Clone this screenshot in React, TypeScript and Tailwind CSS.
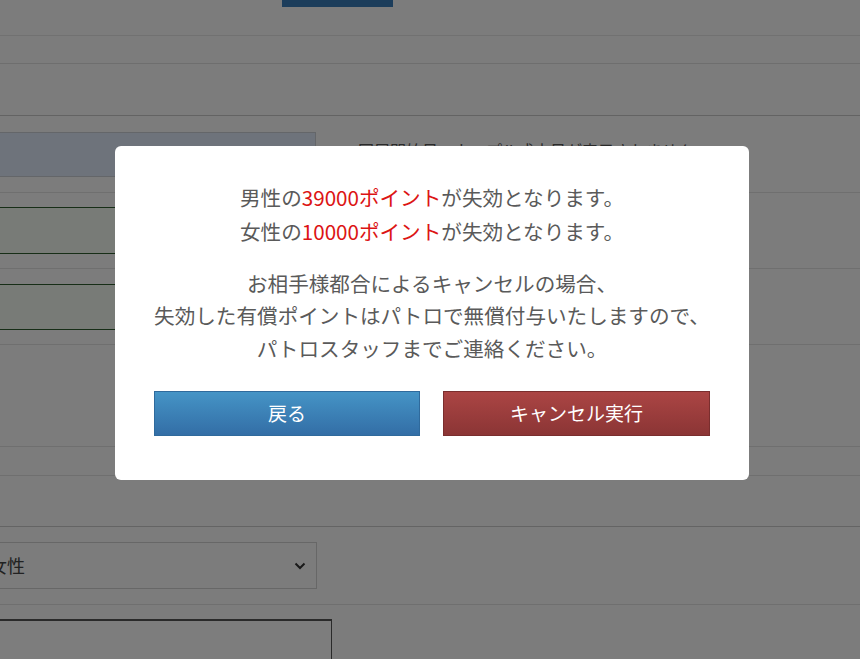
import React from "react";

const font = { fontFamily: '"Noto Sans CJK JP", "Noto Sans", sans-serif' };

function Row({ h, children, dark }: { h: string; children?: React.ReactNode; dark?: boolean }) {
  return (
    <div className={`${h} border-b ${dark ? "border-[#c8c8c8]" : "border-[#dedede]"} flex items-center`}>
      {children}
    </div>
  );
}

export default function App() {
  return (
    <div className="relative w-[860px] h-[659px] overflow-hidden bg-[#f8f8f8]" style={font}>
      {/* background page */}
      <div className="flex flex-col">
        <div className="h-[36px] border-b border-[#e2e2e2]">
          <div className="ml-[282px] w-[111px] h-[7px] bg-[#397ab7]" />
        </div>
        <div className="h-[28px] border-b border-[#dcdcdc]" />
        <div className="h-[52px] border-b border-[#c6c6c6]" />
        <Row h="h-[77px]">
          <div className="w-[316px] h-[45px] bg-[#dde7f7] border border-[#c9ccd2] border-l-0" />
          <div className="ml-[42px] mb-[8px] text-[16px] leading-[20px] text-[#555]">同居開始日・カップル成立日が表示されません</div>
        </Row>
        <Row h="h-[76px]">
          <div className="w-[316px] h-[47px] bg-[#f0f6ee] border border-[#2f5c2f] border-l-0" />
        </Row>
        <Row h="h-[76px]">
          <div className="w-[316px] h-[46px] bg-[#f0f6ee] border border-[#2f5c2f] border-l-0" />
        </Row>
        <Row h="h-[102px]" />
        <Row h="h-[29px]" />
        <Row h="h-[51px]" dark />
        <Row h="h-[78px]">
          <div className="w-[317px] h-[47px] bg-[#f9f9f9] border border-[#cfcfcf] border-l-0 flex items-center justify-between pr-[10px] overflow-hidden">
            <span className="ml-[-11px] text-[18px] text-[#444]">女性</span>
            <svg width="12" height="8" viewBox="0 0 12 8" className="mt-[1px]">
              <path d="M1.5 1.5 L6 6 L10.5 1.5" fill="none" stroke="#333" strokeWidth="2" />
            </svg>
          </div>
        </Row>
        <div className="pt-[14px]">
          <div className="w-[332px] h-[60px] bg-[#fafafa] border-t-2 border-r border-[#555]" />
        </div>
      </div>

      {/* overlay */}
      <div className="absolute inset-0 bg-black/50 flex justify-center pt-[146px]">
        <div className="ml-[4px] w-[634px] h-[334px] bg-white rounded-[6px] pt-[34px] px-[39px] flex flex-col items-stretch">
          <div className="text-center text-[20.6px] leading-[34px] text-[#5a5a5a]">
            <p>
              男性の<span className="text-[#dc1414]">39000ポイント</span>が失効となります。
            </p>
            <p>
              女性の<span className="text-[#dc1414]">10000ポイント</span>が失効となります。
            </p>
          </div>
          <div className="mt-[18.5px] text-center text-[20.6px] leading-[32.5px] text-[#5a5a5a]">
            <p>お相手様都合によるキャンセルの場合、</p>
            <p>失効した有償ポイントはパトロで無償付与いたしますので、</p>
            <p>パトロスタッフまでご連絡ください。</p>
          </div>
          <div className="mt-[27px] flex gap-[23px]">
            <button className="w-[266px] h-[45px] text-white text-[19px] border border-[#2f6a9c] bg-gradient-to-b from-[#4594c6] to-[#336ea6]">
              戻る
            </button>
            <button className="w-[267px] h-[45px] text-white text-[19px] border border-[#7a2e2e] bg-gradient-to-b from-[#ab4544] to-[#8b3535]">
              キャンセル実行
            </button>
          </div>
        </div>
      </div>
    </div>
  );
}
